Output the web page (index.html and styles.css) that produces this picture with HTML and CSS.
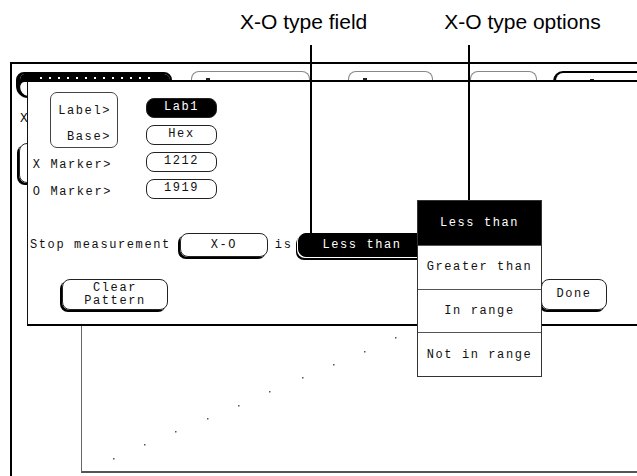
FILE: index.html
```html
<!DOCTYPE html>
<html lang="en">
<head>
<meta charset="UTF-8">
<meta name="viewport" content="width=device-width, initial-scale=1.0">
<title>Stop measurement - X-O type</title>
<link rel="stylesheet" href="styles.css">
</head>
<body>
<div class="captions">
    <span>X-O type field</span>
    <span>X-O type options</span>
</div>

<div class="screen">
    <!-- tab row, mostly hidden by the dialog; only the tops of the labels show -->
    <div class="tabs">
        <div class="tab tab-sel"><div class="marks"></div></div>
        <div class="tab tab-2"><div class="mark"></div></div>
        <div class="tab tab-3"><div class="mark"></div></div>
        <div class="tab tab-4"></div>
        <div class="tab tab-5"><div class="mark"></div></div>
    </div>

    <div class="under">
        <div class="under-text">X</div>
        <div class="under-btn"></div>
    </div>

    <div class="chart">
        <svg width="554" height="271" viewBox="0 0 554 271">
            <g fill="#555">
                <rect x="313" y="137" width="1.5" height="1.5"/>
                <rect x="282" y="151" width="1.5" height="1.5"/>
                <rect x="251" y="164" width="1.5" height="1.5"/>
                <rect x="220" y="177" width="1.5" height="1.5"/>
                <rect x="187" y="191" width="1.5" height="1.5"/>
                <rect x="156" y="205" width="1.5" height="1.5"/>
                <rect x="125" y="218" width="1.5" height="1.5"/>
                <rect x="93" y="231" width="1.5" height="1.5"/>
                <rect x="62" y="244" width="1.5" height="1.5"/>
                <rect x="31" y="258" width="1.5" height="1.5"/>
            </g>
        </svg>
    </div>

    <!-- the pop-up dialog sits over the waveform screen -->
    <div class="dialog">
        <div class="fields">
            <div class="label-box">
                <span>Label&gt;</span>
                <span>Base&gt;</span>
            </div>
            <div class="pill pill-on">Lab1</div>
            <div class="pill">Hex</div>
            <div class="lbl">X Marker&gt;</div>
            <div class="pill">1212</div>
            <div class="lbl">O Marker&gt;</div>
            <div class="pill">1919</div>
        </div>

        <div class="stop-row">
            <span>Stop measurement</span>
            <div class="field xo">X-O</div>
            <span class="is">is</span>
            <div class="field less">Less than</div>
        </div>

        <div class="btn-row">
            <div class="btn clear">Clear<br>Pattern</div>
            <div class="btn done">Done</div>
        </div>
    </div>
</div>

<div class="leader leader-field"></div>
<div class="leader leader-options"></div>

<div class="menu">
    <div class="menu-item selected">Less than</div>
    <div class="menu-item">Greater than</div>
    <div class="menu-item">In range</div>
    <div class="menu-item">Not in range</div>
</div>
</body>
</html>
```

FILE: styles.css
```css
body {
    margin: 0;
    width: 637px;
    height: 476px;
    overflow: hidden;
    position: relative;
    background: #fff;
    color: #111;
    font-family: "Liberation Mono", monospace;
    font-size: 12px;
    letter-spacing: 1.6px;
}
.captions {
    display: flex;
    gap: 77px;
    height: 62px;
    box-sizing: border-box;
    padding: 10px 0 0 240px;
    color: #000;
    font-family: "Liberation Sans", Arial, sans-serif;
    font-size: 21px;
    line-height: 24px;
    letter-spacing: 0;
}
.screen {
    position: relative;
    margin-left: 10px;
    width: 625px;
    height: 414px;
    border-top: 2px solid #000;
    border-left: 2px solid #000;
    overflow: hidden;
}

/* tab row behind the dialog */
.tabs {
    display: flex;
    align-items: flex-start;
    padding-top: 7px;
}
.tab {
    flex: none;
    box-sizing: border-box;
    height: 20px;
    border: 1px solid #888;
    border-bottom: none;
    border-radius: 8px 8px 0 0;
    background: #fff;
    padding-top: 6px;
}
.tab-sel {
    margin: 1px 0 0 4px;
    width: 156px;
    height: 26px;
    border: 2px solid #000;
    border-left-width: 4px;
    border-radius: 8px 8px 8px 12px;
    box-shadow: inset 0 8px 0 #000;
    padding-top: 3px;
}
.marks {
    margin-left: 20px;
    width: 112px;
    height: 2px;
    background: repeating-linear-gradient(90deg, #fff 0 2px, transparent 2px 9px);
}
.mark {
    margin-left: 14px;
    width: 4px;
    height: 2px;
    background: #222;
}
.tab-2 { margin-left: 19px; width: 119px; }
.tab-3 { margin-left: 38px; width: 85px; }
.tab-4 { margin-left: 37px; width: 67px; }
.tab-5 {
    margin-left: 16px;
    width: 84px;
    border: 2px solid #000;
    border-left-width: 3px;
    border-right: none;
    border-radius: 10px 0 0 0;
}
.tab-5 .mark {
    margin-left: 34px;
}
.under {
    padding: 15px 0 0 8px;
}
.under-text {
    line-height: 12px;
    font-size: 13px;
}
.under-btn {
    margin: 18px 0 0 -1px;
    width: 40px;
    height: 40px;
    box-sizing: border-box;
    border: 1px solid #222;
    border-radius: 8px;
    box-shadow: -2px 2px 0 #000;
}
.chart {
    margin: 17px 0 0 69px;
    width: 556px;
    height: 273px;
    box-sizing: border-box;
    border-left: 1px solid #666;
    border-bottom: 2px solid #555;
}
.chart svg {
    display: block;
}

/* dialog */
.dialog {
    position: absolute;
    left: 15px;
    top: 16px;
    width: 610px;
    height: 246px;
    box-sizing: border-box;
    padding-top: 12px;
    background: #fff;
    border-top: 2px solid #000;
    border-bottom: 2px solid #000;
    border-left: 1px solid #111;
}
.fields {
    display: grid;
    grid-template-columns: 84px 71px;
    grid-auto-rows: 27px;
    column-gap: 34px;
}
.label-box {
    grid-column: 1;
    grid-row: 1 / span 2;
    justify-self: end;
    width: 68px;
    height: 56px;
    margin: -2px -6px 0 0;
    box-sizing: border-box;
    padding: 5px 6px 0 0;
    border: 1px solid #444;
    border-radius: 7px;
    text-align: right;
}
.label-box span {
    display: block;
    line-height: 26px;
}
.lbl {
    text-align: right;
    padding-top: 8px;
    line-height: 19px;
}
.pill {
    align-self: center;
    height: 20px;
    box-sizing: border-box;
    border: 1px solid #222;
    border-radius: 8px;
    line-height: 16px;
    text-align: center;
}
.pill-on {
    background: #000;
    color: #fff;
}
.stop-row {
    display: flex;
    align-items: center;
    height: 24px;
    margin-top: 31px;
    padding-left: 2px;
}
.field {
    flex: none;
    box-sizing: border-box;
    height: 24px;
    border-radius: 8px;
    line-height: 22px;
}
.xo {
    width: 88px;
    margin-left: 9px;
    border: 1px solid #222;
    box-shadow: -2px 2px 0 #000;
    text-align: center;
}
.is {
    margin-left: 7px;
}
.less {
    width: 140px;
    margin-left: 6px;
    padding-left: 23px;
    background: #000;
    color: #fff;
    border: 1px solid #000;
    box-shadow: -1px 1px 0 #fff, -2px 3px 0 #000;
}
.btn-row {
    display: flex;
    justify-content: space-between;
    align-items: flex-start;
    width: 579px;
    box-sizing: border-box;
    padding-left: 34px;
    margin-top: 22px;
}
.btn {
    box-sizing: border-box;
    height: 31px;
    border: 1px solid #222;
    border-radius: 8px;
    box-shadow: -2px 2px 0 #000;
    text-align: center;
}
.clear {
    width: 106px;
    padding-top: 2px;
    line-height: 13px;
}
.done {
    width: 66px;
    line-height: 29px;
}

/* callout lines */
.leader {
    position: absolute;
    top: 45px;
    width: 2px;
    background: #000;
}
.leader-field {
    left: 310px;
    height: 188px;
}
.leader-options {
    left: 468px;
    height: 155px;
}

/* options menu */
.menu {
    position: absolute;
    left: 417px;
    top: 200px;
    width: 125px;
    height: 177px;
    box-sizing: border-box;
    border: 1px solid #333;
    background: #fff;
    display: flex;
    flex-direction: column;
}
.menu-item {
    flex: 1;
    display: flex;
    align-items: center;
    justify-content: center;
    border-top: 1px solid #555;
}
.menu-item.selected {
    flex: 0 0 44px;
    border-top: none;
    background: #000;
    color: #fff;
}
```
